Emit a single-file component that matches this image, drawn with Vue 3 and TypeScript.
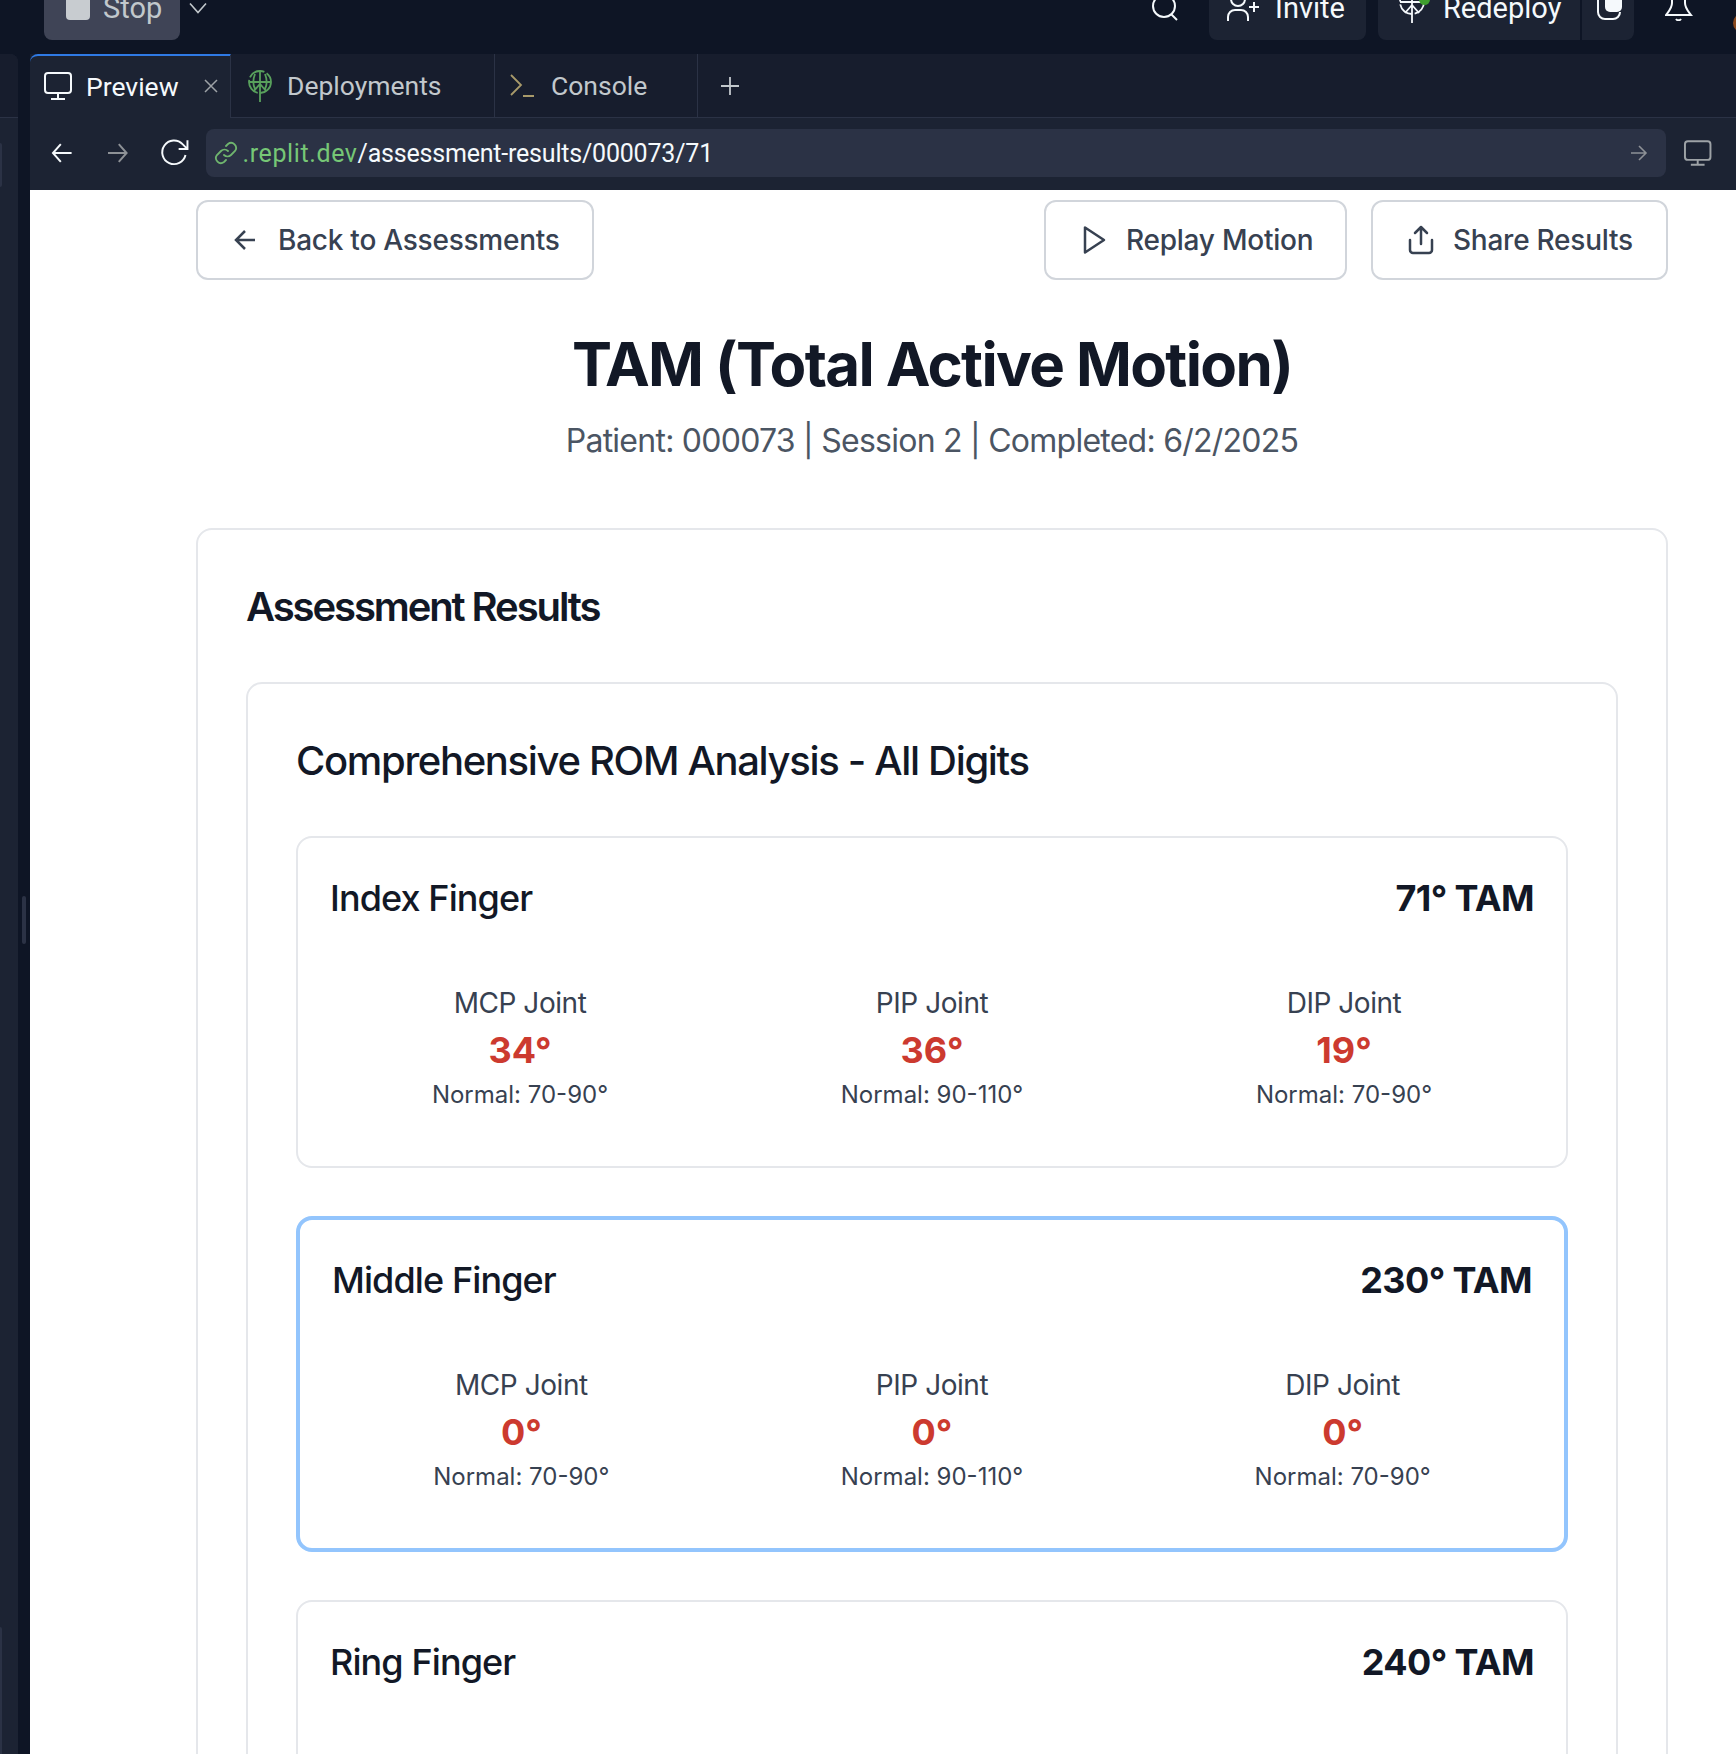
<script setup lang="ts">
interface Joint {
  name: string;
  value: string;
  normal: string;
}

interface Finger {
  name: string;
  tam: string;
  active?: boolean;
  joints: Joint[];
}

function joints(mcp: string, pip: string, dip: string): Joint[] {
  return [
    { name: "MCP Joint", value: mcp, normal: "Normal: 70-90°" },
    { name: "PIP Joint", value: pip, normal: "Normal: 90-110°" },
    { name: "DIP Joint", value: dip, normal: "Normal: 70-90°" },
  ];
}

const fingers: Finger[] = [
  { name: "Index Finger", tam: "71° TAM", joints: joints("34°", "36°", "19°") },
  { name: "Middle Finger", tam: "230° TAM", active: true, joints: joints("0°", "0°", "0°") },
  { name: "Ring Finger", tam: "240° TAM", joints: [] },
];
</script>

<template>
  <div class="app">
    <header class="topbar">
      <button class="stop-btn">
        <span class="stop-square"></span>
        <span>Stop</span>
      </button>
      <svg class="chevron" width="20" height="12" viewBox="0 0 20 12" fill="none" stroke="#c2c8cc" stroke-width="1.6">
        <path d="M2 1.5l8 9 8-9" />
      </svg>
      <div class="topbar-spacer"></div>
      <svg class="search" width="30" height="30" viewBox="0 0 30 30" fill="none" stroke="#f5f9fc" stroke-width="2">
        <circle cx="15" cy="14" r="11" />
        <path d="M22 22l6 6" />
      </svg>
      <button class="dark-btn invite">
        <svg width="34" height="34" viewBox="0 0 34 34" fill="none" stroke="#f5f9fc" stroke-width="2">
          <circle cx="12" cy="4" r="7" />
          <path d="M2 26v-4a7 7 0 0 1 7-7h6a7 7 0 0 1 7 7v4M23 12h10M28 7v10" />
        </svg>
        <span>Invite</span>
      </button>
      <div class="deploy-group">
        <button class="dark-btn redeploy">
          <span class="icon-wrap">
            <svg width="30" height="40" viewBox="0 0 30 40" fill="none" stroke="#f5f9fc" stroke-width="1.8">
              <circle cx="14" cy="9" r="12" stroke-dasharray="16 3" />
              <path d="M2 9h24M14 -3v33M7 20l7-8 7 8" />
            </svg>
            <span class="green-dot"></span>
          </span>
          <span>Redeploy</span>
        </button>
        <button class="dark-btn share-square">
          <svg width="28" height="36" viewBox="0 0 28 36" fill="none">
            <rect x="8" y="-10" width="17" height="29" rx="5" fill="#f5f9fc" />
            <path d="M1 0v19a7 7 0 0 0 7 7h8a7 7 0 0 0 7-7" stroke="#f5f9fc" stroke-width="2" />
          </svg>
        </button>
      </div>
      <svg class="bell" width="28" height="40" viewBox="0 0 28 40" fill="none" stroke="#f5f9fc" stroke-width="2">
        <path d="M7 10v12c0 5-3 8-6 12h25c-3-4-6-7-6-12V10M11 38a3 3 0 0 0 5 0" />
      </svg>
      <span class="avatar"></span>
    </header>

    <div class="workspace">
      <aside class="side">
        <div class="side-tabs"></div>
        <span class="side-bit first"></span>
        <div class="side-fill"></div>
        <span class="side-bit last"></span>
      </aside>
      <div class="gutter"><span class="handle"></span></div>

      <main class="pane">
        <div class="tabs">
          <div class="tab active">
            <svg width="30" height="30" viewBox="0 0 30 30" fill="none" stroke="#f5f9fc" stroke-width="2">
              <rect x="2" y="2" width="26" height="20" rx="3" />
              <path d="M15 22v6M8 28h14" />
            </svg>
            <span class="tab-label">Preview</span>
            <svg class="tab-close" width="14" height="14" viewBox="0 0 14 14" stroke="#9da2a6" stroke-width="1.5">
              <path d="M1 1l12 12M13 1L1 13" />
            </svg>
          </div>
          <div class="tab deployments">
            <svg width="26" height="32" viewBox="0 0 26 32" fill="none" stroke="#58a05c" stroke-width="1.8">
              <circle cx="13" cy="12" r="11" stroke-dasharray="17 2.500" />
              <path d="M2 12h22M13 1v31M7 21l6-7 6 7M8 4c-2 5-2 11 0 15M18 4c2 5 2 11 0 15" />
            </svg>
            <span class="tab-label">Deployments</span>
          </div>
          <div class="tab console">
            <svg width="26" height="26" viewBox="0 0 26 26" fill="none" stroke="#a89a6a" stroke-width="1.800">
              <path d="M2 2l10 10-10 10M14 23h11" />
            </svg>
            <span class="tab-label">Console</span>
          </div>
          <svg class="plus" width="18" height="18" viewBox="0 0 18 18" stroke="#c2c8cc" stroke-width="1.800">
            <path d="M9 0v18M0 9h18" />
          </svg>
        </div>

        <div class="navbar">
          <svg class="nav-back" width="22" height="22" viewBox="0 0 22 22" fill="none" stroke="#f5f9fc" stroke-width="2">
            <path d="M21 11H2M10 2l-8 9 8 9" />
          </svg>
          <svg class="nav-forward" width="22" height="22" viewBox="0 0 22 22" fill="none" stroke="#8d9196" stroke-width="2">
            <path d="M1 11h19M12 2l8 9-8 9" />
          </svg>
          <svg class="nav-reload" width="30" height="30" viewBox="0 0 30 30" fill="none" stroke="#f5f9fc" stroke-width="2">
            <path d="M26 17a12 12 0 1 1-3-11l5 5M28 2v9h-9" />
          </svg>
          <div class="url-bar">
            <svg width="24" height="24" viewBox="0 0 24 24" fill="none" stroke="#6fb56e" stroke-width="1.800" stroke-linecap="round">
              <path d="M10 14a5 5 0 0 0 7 0l4-4a5 5 0 0 0-7-7l-2 2" />
              <path d="M14 10a5 5 0 0 0-7 0l-4 4a5 5 0 0 0 7 7l2-2" />
            </svg>
            <span class="url-text"><span class="url-host">.replit.dev</span>/assessment-results/000073/71</span>
            <svg class="url-go" width="18" height="18" viewBox="0 0 18 18" fill="none" stroke="#8d9196" stroke-width="1.600">
              <path d="M1 9h15M9 2l7 7-7 7" />
            </svg>
          </div>
          <svg class="nav-device" width="30" height="28" viewBox="0 0 30 28" fill="none" stroke="#9da2a6" stroke-width="2">
            <rect x="2" y="2" width="26" height="19" rx="3" />
            <path d="M15 21v6M8 26h14" />
          </svg>
        </div>

        <div class="page">
          <div class="actions">
            <button class="outline-btn back">
              <svg width="32" height="32" viewBox="0 0 32 32" fill="none" stroke="#374151" stroke-width="2.500">
                <path d="M25 16H7M15 7l-9 9 9 9" />
              </svg>
              <span>Back to Assessments</span>
            </button>
            <div class="actions-right">
              <button class="outline-btn replay">
                <svg width="32" height="32" viewBox="0 0 32 32" fill="none" stroke="#374151" stroke-width="2.500" stroke-linejoin="round">
                  <path d="M7 3.500v25L26 16z" />
                </svg>
                <span>Replay Motion</span>
              </button>
              <button class="outline-btn share">
                <svg width="32" height="32" viewBox="0 0 32 32" fill="none" stroke="#374151" stroke-width="2.500" stroke-linecap="round" stroke-linejoin="round">
                  <path d="M5 16v10a3 3 0 0 0 3 3h16a3 3 0 0 0 3-3V16M16 20V3M10 9l6-6 6 6" />
                </svg>
                <span>Share Results</span>
              </button>
            </div>
          </div>

          <h1 class="title">TAM (Total Active Motion)</h1>
          <p class="subtitle">Patient: 000073 | Session 2 | Completed: 6/2/2025</p>

          <section class="card results">
            <h2 class="results-title">Assessment Results</h2>
            <div class="card analysis">
              <h3 class="analysis-title">Comprehensive ROM Analysis - All Digits</h3>
              <div class="finger-list">
                <div v-for="finger in fingers" :key="finger.name" class="finger" :class="{ active: finger.active }">
                  <div class="finger-head">
                    <span class="finger-name">{{ finger.name }}</span>
                    <span class="finger-tam">{{ finger.tam }}</span>
                  </div>
                  <div v-if="finger.joints.length" class="joints">
                    <div v-for="joint in finger.joints" :key="joint.name" class="joint">
                      <div class="joint-name">{{ joint.name }}</div>
                      <div class="joint-value">{{ joint.value }}</div>
                      <div class="joint-normal">{{ joint.normal }}</div>
                    </div>
                  </div>
                  <div v-else class="joints-empty"></div>
                </div>
              </div>
            </div>
          </section>
        </div>
      </main>
    </div>
  </div>
</template>

<style scoped>
.app {
  width: 1736px;
  height: 1754px;
  overflow: hidden;
  display: flex;
  flex-direction: column;
  background: #0e1525;
  font-family: Inter, "Liberation Sans", sans-serif;
}

button {
  font-family: inherit;
  cursor: pointer;
}

.topbar {
  height: 54px;
  flex: none;
  display: flex;
  align-items: flex-end;
  padding: 0 0 14px 44px;
  box-sizing: border-box;
  font-family: Roboto, "Liberation Sans", sans-serif;
}

.stop-btn {
  width: 136px;
  height: 64px;
  flex: none;
  display: flex;
  align-items: center;
  gap: 13px;
  padding: 0 0 0 22px;
  border: none;
  border-radius: 8px;
  background: #3f4456;
  color: #c2c8cc;
  font-size: 29px;
  font-family: inherit;
}

.stop-square {
  width: 24px;
  height: 40px;
  margin-top: -16px;
  border-radius: 4px;
  background: #c8ccd0;
}

.chevron {
  margin: 0 0 26px 8px;
}

.topbar-spacer {
  flex: 1;
}

.search {
  margin: 0 30px 18px 0;
}

.dark-btn {
  height: 64px;
  flex: none;
  display: flex;
  align-items: center;
  border: none;
  background: #1c2333;
  color: #f5f9fc;
  font-size: 29px;
  font-family: inherit;
}

.dark-btn svg {
  display: block;
}

.invite {
  width: 157px;
  gap: 15px;
  padding: 0 0 0 17px;
  border-radius: 8px;
  margin-right: 12px;
}

.invite svg {
  margin-top: 8px;
}

.deploy-group {
  display: flex;
  gap: 2px;
}

.redeploy {
  width: 202px;
  gap: 15px;
  padding: 0 0 0 20px;
  border-radius: 8px 0 0 8px;
}

.icon-wrap {
  position: relative;
  margin-top: 10px;
}

.green-dot {
  position: absolute;
  left: 21px;
  top: 1px;
  width: 11px;
  height: 11px;
  border-radius: 50%;
  background: #3f9e2f;
}

.share-square {
  width: 52px;
  padding: 0 0 0 15px;
  border-radius: 0 8px 8px 0;
}

.share-square svg {
  margin-top: 6px;
  overflow: hidden;
}

.bell {
  margin: 0 0 19px 31px;
}

.avatar {
  width: 20px;
  height: 20px;
  flex: none;
  margin: 0 -17px 7px 40px;
  border-radius: 50%;
  background: #8a4a1f;
}

.workspace {
  flex: 1;
  min-height: 0;
  display: flex;
}

.side {
  width: 18px;
  flex: none;
  display: flex;
  flex-direction: column;
  background: #1c2333;
  border-radius: 0 8px 0 0;
  overflow: hidden;
}

.side-tabs {
  height: 64px;
  flex: none;
  background: #171d2d;
  border-bottom: 1px solid #2b3245;
  box-sizing: border-box;
}

.side-bit {
  width: 2px;
  flex: none;
  background: #2b3245;
}

.side-bit.first {
  height: 44px;
  margin-top: 25px;
  border-radius: 0 4px 4px 0;
}

.side-fill {
  flex: 1;
}

.side-bit.last {
  height: 127px;
  border-radius: 0 4px 0 0;
}

.gutter {
  width: 12px;
  flex: none;
  display: flex;
  justify-content: center;
  padding-top: 842px;
  box-sizing: border-box;
}

.handle {
  width: 4px;
  height: 48px;
  border-radius: 2px;
  background: #2b3245;
}

.pane {
  flex: 1;
  min-width: 0;
  display: flex;
  flex-direction: column;
}

.tabs {
  height: 64px;
  flex: none;
  display: flex;
  align-items: stretch;
  background: #171d2d;
  box-sizing: border-box;
  border-bottom: 1px solid #2b3245;
  font-family: Roboto, "Liberation Sans", sans-serif;
  font-size: 26.5px;
  color: #c2c8cc;
}

.tab {
  display: flex;
  align-items: center;
  box-sizing: border-box;
  border-right: 1px solid #2b3245;
  flex: none;
}

.tab.active {
  width: 201px;
  height: 64px;
  padding: 0 0 2px 13px;
  border-top: 2px solid #2f7ae5;
  border-top-left-radius: 8px;
  background: #1c2333;
  color: #f5f9fc;
}

.tab.active .tab-label {
  margin-left: 13px;
}

.tab-close {
  margin-left: 25px;
}

.deployments {
  width: 264px;
  padding-left: 16px;
}

.deployments .tab-label {
  margin-left: 14px;
}

.console {
  width: 203px;
  padding-left: 14px;
}

.console .tab-label {
  margin-left: 16px;
}

.plus {
  align-self: center;
  margin-left: 23px;
}

.navbar {
  height: 72px;
  flex: none;
  display: flex;
  align-items: center;
  box-sizing: border-box;
  padding: 0 24px 3px 21px;
  background: #1c2333;
  font-family: Roboto, "Liberation Sans", sans-serif;
}

.nav-forward {
  margin-left: 34px;
}

.nav-reload {
  margin-left: 32px;
}

.url-bar {
  width: 1460px;
  height: 48px;
  flex: none;
  margin-left: 16px;
  display: flex;
  align-items: center;
  padding: 0 18px 0 8px;
  box-sizing: border-box;
  border-radius: 8px;
  background: #2b3245;
  color: #f5f9fc;
  font-size: 25px;
  letter-spacing: -0.2px;
}

.url-text {
  margin: 2px 0 0 5px;
}

.url-host {
  color: #76c776;
  letter-spacing: 0.6px;
}

.url-go {
  margin-left: auto;
}

.nav-device {
  margin-left: 17px;
}

.page {
  flex: 1;
  min-height: 0;
  overflow: hidden;
  background: #fff;
  padding: 10px 68px 0 166px;
}

.actions {
  display: flex;
  justify-content: space-between;
}

.actions-right {
  display: flex;
  gap: 24px;
}

.outline-btn {
  height: 80px;
  display: flex;
  align-items: center;
  gap: 16px;
  box-sizing: border-box;
  border: 2px solid #d1d5db;
  border-radius: 12px;
  background: #fff;
  color: #374151;
  font-size: 28px;
  font-weight: 500;
  letter-spacing: -0.24px;
}

.back {
  width: 398px;
  padding: 0 0 0 32px;
}

.replay {
  width: 303px;
  padding: 0 0 0 32px;
}

.share {
  width: 297px;
  padding: 0 0 0 32px;
}

.title {
  margin: 48px 0 0;
  font-size: 60px;
  line-height: 72px;
  font-weight: 700;
  letter-spacing: -1.65px;
  text-align: center;
  color: #121826;
}

.subtitle {
  margin: 17px 0 0;
  font-size: 32px;
  line-height: 48px;
  letter-spacing: -0.75px;
  text-align: center;
  color: #4b5563;
}

.card {
  border: 2px solid #e5e7eb;
  border-radius: 16px;
  background: #fff;
  padding: 48px;
}

.results {
  margin-top: 63px;
}

.results-title {
  margin: 0 0 47px;
  padding-top: 1px;
  font-size: 40px;
  line-height: 56px;
  font-weight: 600;
  letter-spacing: -2.1px;
  color: #121826;
}

.analysis-title {
  margin: 0 0 47px;
  padding-top: 1px;
  font-size: 40px;
  line-height: 56px;
  font-weight: 500;
  letter-spacing: -1.33px;
  color: #121826;
}

.finger-list {
  display: flex;
  flex-direction: column;
  gap: 48px;
}

.finger {
  border: 2px solid #e5e7eb;
  border-radius: 16px;
  padding: 32px;
}

.finger.active {
  border: 4px solid #93c5fd;
}

.finger-head {
  display: flex;
  justify-content: space-between;
  font-size: 36px;
  line-height: 56px;
  color: #121826;
}

.finger-name {
  font-weight: 500;
  letter-spacing: -0.9px;
}

.finger-tam {
  font-weight: 700;
  letter-spacing: -0.6px;
}

.joints {
  display: grid;
  grid-template-columns: repeat(3, 1fr);
  gap: 32px;
  margin-top: 32px;
}

.joints-empty {
  height: 240px;
}

.joint {
  padding: 25px 24px 23px;
  text-align: center;
}

.joint-name {
  font-size: 28px;
  line-height: 40px;
  letter-spacing: -0.45px;
  color: #374151;
}

.joint-value {
  margin: -1px 0 1px;
  font-size: 36px;
  line-height: 56px;
  font-weight: 700;
  color: #cc3a2f;
}

.joint-normal {
  font-size: 24px;
  line-height: 32px;
  color: #374151;
}
</style>
